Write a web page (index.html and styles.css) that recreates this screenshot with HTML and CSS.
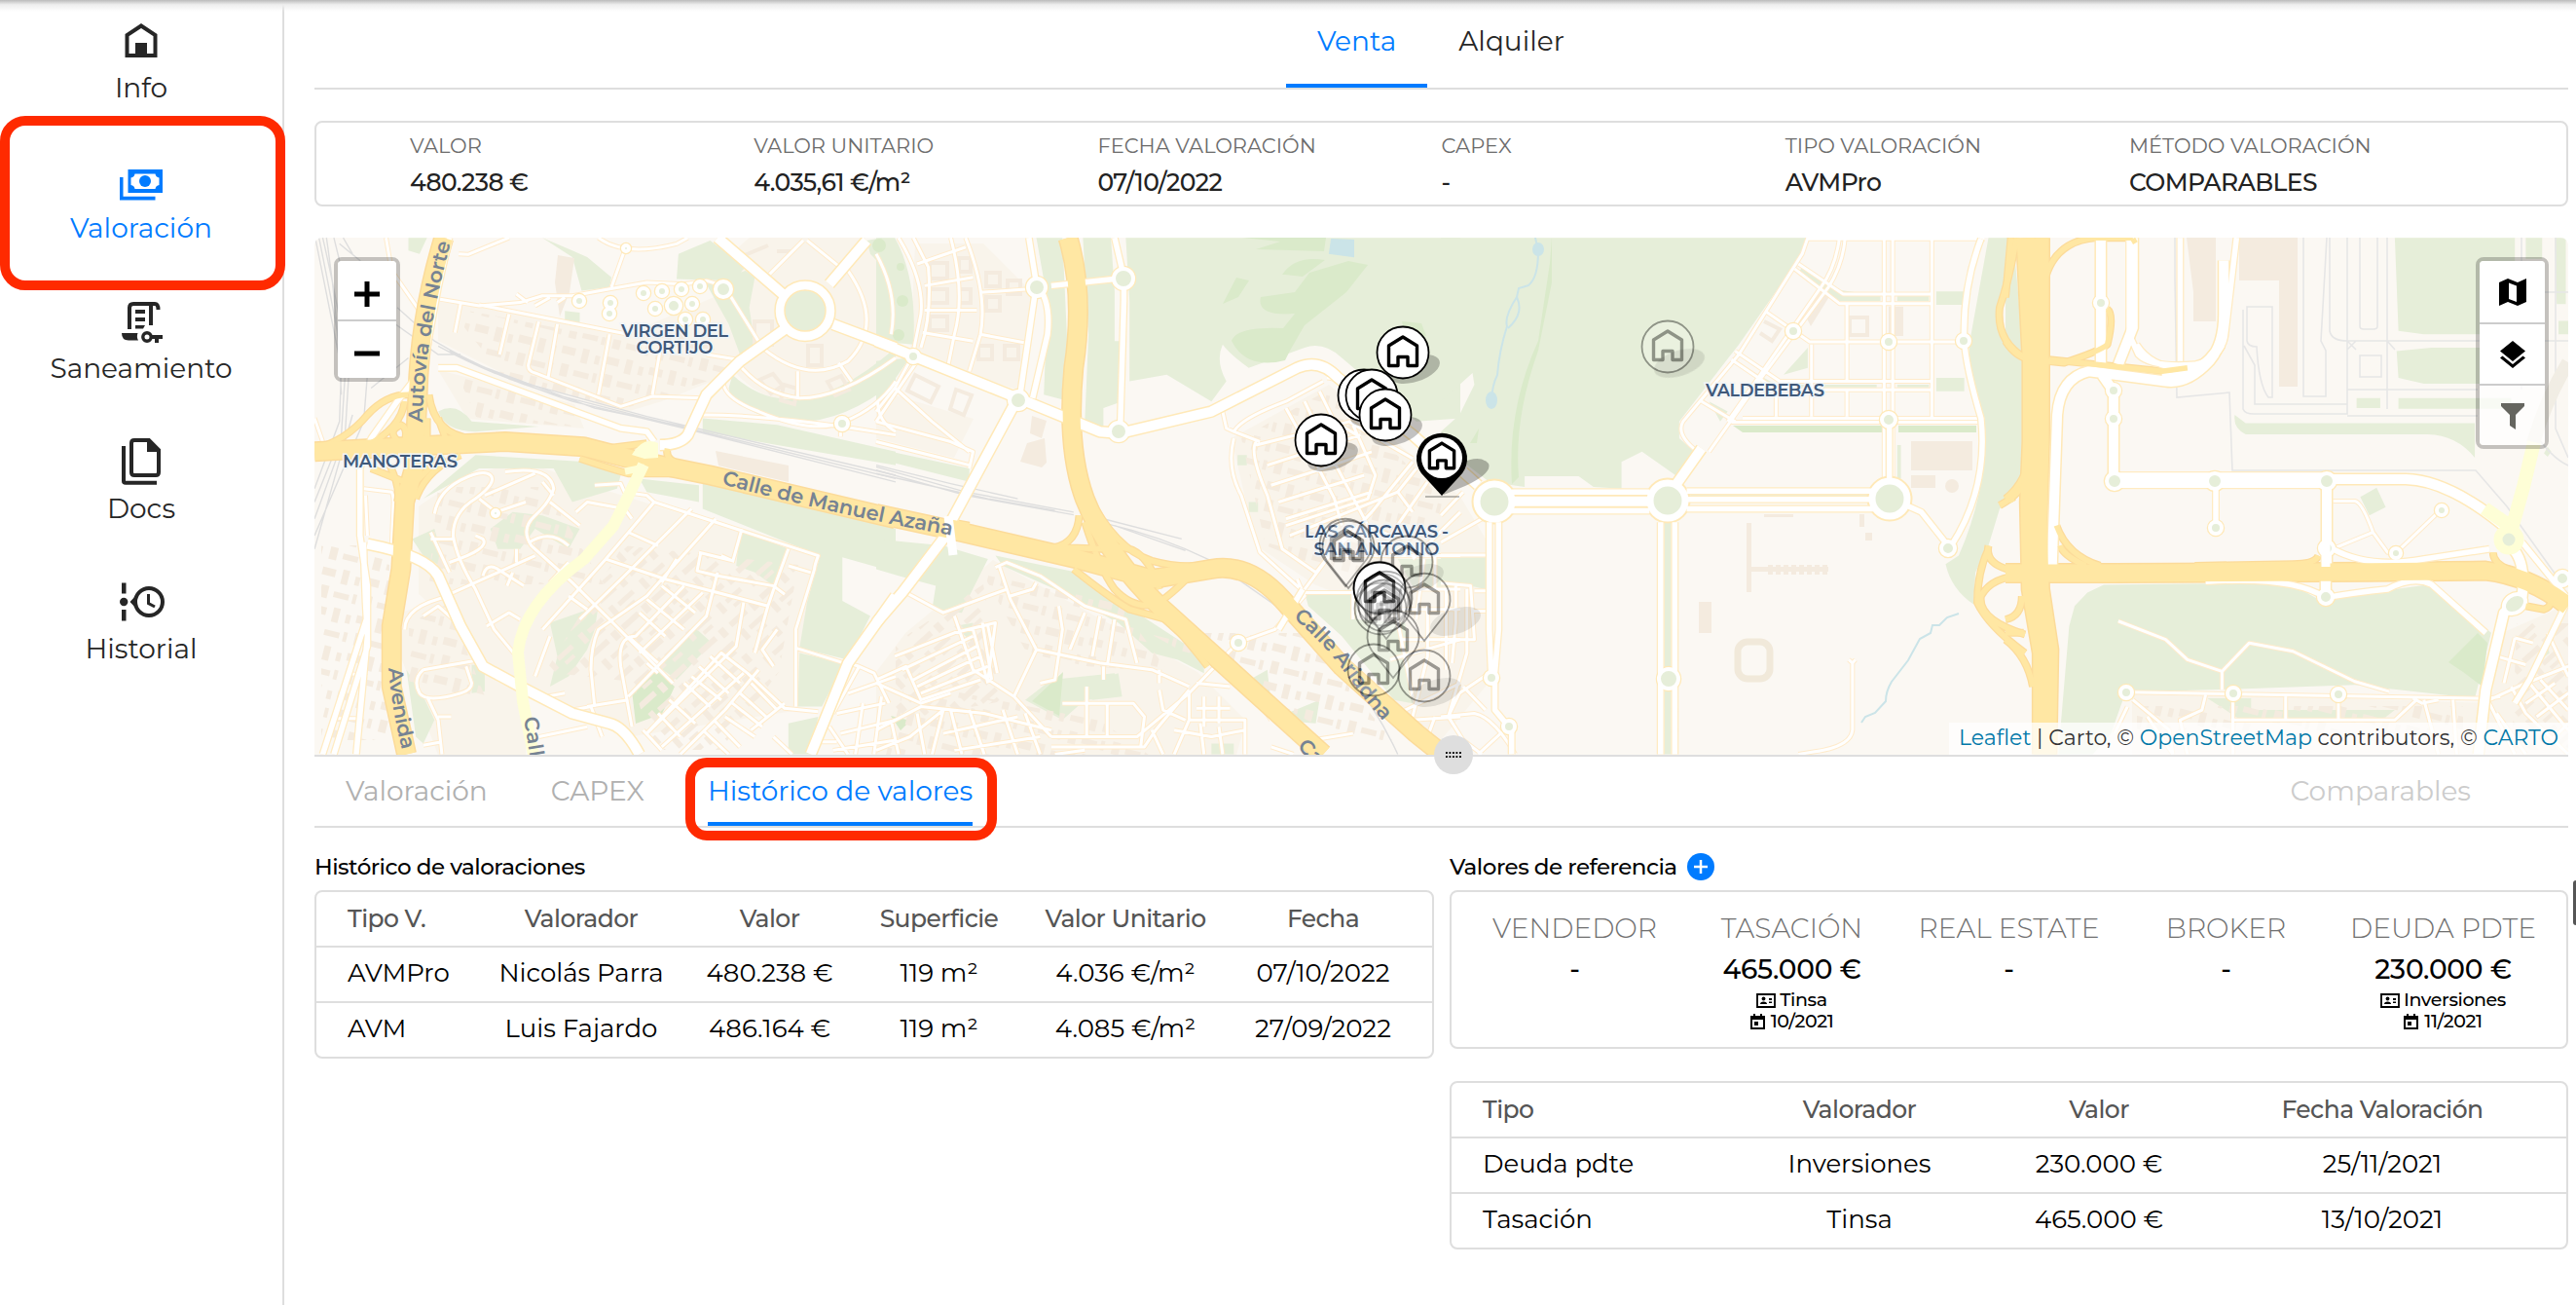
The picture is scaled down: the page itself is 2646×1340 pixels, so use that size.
FILE: index.html
```html
<!DOCTYPE html>
<html lang="es">
<head>
<meta charset="utf-8">
<title>Valoración</title>
<link rel="stylesheet" href="styles.css">
</head>
<body>
<div class="app">
  <nav class="sidebar">
    <a class="nav-item">
      <svg class="nav-icon" viewBox="0 0 48 48"><path d="M9.5 39V18L24 8.500 38.500 18V39Z" fill="none" stroke="currentColor" stroke-width="4"/><path d="M18 26H30V40H18Z"/></svg>
      <span>Info</span>
    </a>
    <a class="nav-item active">
      <svg class="nav-icon" viewBox="0 0 48 48"><path fill-rule="evenodd" d="M10.500 12H46V36H10.500ZM17.500 16.500Q17 20 13.500 20.500V28Q17 28.500 17.500 32H38.500Q39 28.500 42.500 28V20.500Q39 20 38.500 16.500Z"/><circle cx="28" cy="24" r="6"/><path d="M2 20H5.500V39.800H38.500V43.400H2Z"/></svg>
      <span>Valoración</span>
    </a>
    <a class="nav-item">
      <svg class="nav-icon" viewBox="0 0 48 48"><path d="M12 32V10Q12 6 16 6H38Q41.500 6 41.500 12M34 7V28" fill="none" stroke="currentColor" stroke-width="4"/><path d="M18 12H28V16H18ZM18 20H28V24H18ZM18 28H28L26 31.500H18ZM4 36H20.500Q19 40 21 43.500H11Q4 43.500 4 36Z"/><circle cx="30" cy="40" r="4.200" fill="none" stroke="currentColor" stroke-width="3.400"/><path d="M34 38H46V42H42V46H38V42H34Z"/></svg>
      <span>Saneamiento</span>
    </a>
    <a class="nav-item">
      <svg class="nav-icon" viewBox="0 0 48 48"><path d="M14 5Q14 2 17 2H32L42 12V35Q42 38 39 38H17Q14 38 14 35Z" fill="none" stroke="currentColor" stroke-width="4"/><path d="M30 2V14H43ZM4 8H8V43.800H40V47.800H8Q4 47.800 4 44Z"/></svg>
      <span>Docs</span>
    </a>
    <a class="nav-item">
      <svg class="nav-icon" viewBox="0 0 48 48"><path d="M4 4.500H8.500V15.500H4ZM4 32H8.500V43.500H4ZM12.500 24L19 17V31Z"/><circle cx="6.200" cy="24" r="4.200"/><circle cx="32" cy="24" r="14" fill="none" stroke="currentColor" stroke-width="4"/><path d="M31.500 16V25.500L38 29" fill="none" stroke="currentColor" stroke-width="3"/></svg>
      <span>Historial</span>
    </a>
  </nav>

  <main class="content">
    <div class="tabs-top"><a class="tab active">Venta</a><a class="tab">Alquiler</a></div>

    <section class="card summary">
      <div><label>VALOR</label><b>480.238 €</b></div>
      <div><label>VALOR UNITARIO</label><b>4.035,61 €/m²</b></div>
      <div><label>FECHA VALORACIÓN</label><b>07/10/2022</b></div>
      <div><label>CAPEX</label><b>-</b></div>
      <div><label>TIPO VALORACIÓN</label><b>AVMPro</b></div>
      <div><label>MÉTODO VALORACIÓN</label><b>COMPARABLES</b></div>
    </section>

    <section class="map">
      <svg class="map-canvas" viewBox="323 244 2315 531">
        <defs>
          <pattern id="blocks" width="46" height="40" patternUnits="userSpaceOnUse" patternTransform="rotate(14)"><path class="building" d="M3 4h14v8H3zM24 2h7v15h-7zM38 6h5v9h-5zM6 22h8v13H6zM20 26h16v6H20zM40 24h4v10h-4z"/></pattern>
          <pattern id="blocks-r" width="42" height="36" patternUnits="userSpaceOnUse" patternTransform="rotate(-42)"><path class="building" d="M2 4h22v6H2zM30 3h7v10h-7zM4 18h6v12H4zM15 20h20v5H15zM18 29h12v4H18z"/></pattern>

          <g id="minor">
            <g transform="matrix(.38265 0 0 .34439 320 240)">
              <path d="M200 12L215 110 290 230M395 60L420 62 490 30 530 12M345 195L450 215 560 205 620 185 700 185 800 165 900 145 1000 150 1060 140 1090 150M450 212L850 300M400 210L385 295M530 240L505 360M610 262L582 390Q580 410 600 415L830 515 915 485 1050 490M660 270L635 430M800 300L770 480M940 320L915 480M1060 360L1145 375M840 50L805 160M770 12Q840 70 980 30L1010 12M1110 160L1205 330M1230 120L1320 20M1330 20L1430 110M1210 340Q1330 450 1440 380Q1540 270 1440 110M1155 400Q1220 480 1310 490Q1420 490 1568 370M1305 410V490M1415 385L1450 440M1105 440Q1105 490 1200 530Q1350 600 1430 560Q1520 520 1568 440M1050 540Q1250 540 1568 600M1420 570V605M1520 500Q1520 560 1568 590M580 205L550 180M640 190L600 215M680 190L660 205"/>
              <path d="M330 835Q340 770 400 735 Q460 700 480 720 T440 790Q380 830 380 900 Q390 970 440 1060L490 1180 550 1260M450 790L495 830 575 800M465 780L600 715M520 710Q640 690 650 760Q640 800 600 840Q560 880 590 930L700 1040 800 1150 970 1340M640 800L720 870M585 920Q640 880 690 930M320 890L370 1010M320 910H380M370 980Q480 940 460 910L440 900M360 1080L600 960M370 1080Q250 1110 250 1180M300 1140L340 1110 390 1160M550 940V980M460 1020Q470 980 500 1000L570 1050M540 1010L525 1050M470 1170L530 1130 560 1150M760 750L830 745 840 770 900 780 920 800 1360 960Q1350 990 1350 1000L1300 1180 1300 1410M710 830L740 800 840 820 860 850M920 800L790 970 620 1180M1020 820L840 1020 720 1150M1085 850L900 1080 770 1180Q750 1230 750 1300L760 1410M1155 880L1130 980M850 890L930 930M790 970L950 1030 1090 1070 1225 1110M1000 1050L870 1200Q820 1200 830 1290L860 1470M1280 940L1250 1030 1225 1110 1190 1250M1280 990L1340 1010M1040 950L1130 975 1100 960M1045 950L1035 1005 1090 1020 1240 1050 1270 1075M1090 1010L1060 1140 850 1380M1160 1100L1140 1230 900 1490M1300 1235L1430 1280M1250 1180L1210 1240 1240 1290M980 970L940 1040M650 780L620 740M690 980L640 1040M690 1080L740 1120M640 1200L600 1320"/>
              <path d="M900 1490L1100 1250 1170 1310 1270 1415 1360 1425M940 1530L1160 1310M900 1280L930 1310M1000 1340L1070 1410M1020 1320L1100 1390M1040 1290L1120 1370M1070 1260L1150 1340M960 1390L1030 1460M930 1430L990 1500M890 1480L940 1540M1130 1400L1210 1470M1150 1370L1220 1440M1180 1340L1250 1420M1110 1440L1190 1500M1200 1300L1110 1420 990 1552M1270 1400L1180 1480M1080 1450L1150 1530M1050 1480L1120 1552M850 1200L930 1280M880 1130L950 1200M900 1090L1000 1180M940 1050L1030 1130M880 1250L1050 1070M740 1410L850 1390M700 1420L750 1410 780 1500M610 1500L740 1470M630 1380L680 1370"/>
              <path d="M140 760L215 770Q220 780 220 800L215 930M145 780L150 900M300 1300L430 1275 450 1270M300 1300Q270 1330 290 1370Q310 1400 400 1370Q430 1360 430 1340L415 1290M310 1380L340 1450 350 1552M300 1525L350 1515M340 1440H375M100 1310L150 1320M70 1445H130M8 550L30 620M1365 1515H1410M1400 1430L1470 1290 1510 1310 1550 1400M1470 1290L1440 1280M1390 1470L1440 1552M1440 1370L1568 1320M1410 1430L1540 1400M1420 1490L1568 1450M1480 1400L1460 1552M1530 1380L1510 1552M1240 1500L1290 1552M1400 1540L1568 1510"/>
            </g>
            <g transform="matrix(.38265 0 0 .34439 900 240)">
              <path d="M0 60Q60 180 40 300M60 12Q130 140 120 240L100 350M100 12L140 100Q150 240 120 340M110 90L240 40M130 155L260 130M130 228H270M125 295L260 320M200 12Q240 180 210 300L190 410M240 12Q300 180 280 300L250 410M280 175L410 165M280 300L400 325M90 380L50 460 0 530M110 380L0 560M50 460L150 560 250 650M0 560L200 620 260 650 250 700M0 620L180 670 250 690"/>
              <path d="M930 530L940 580 960 590 1030 620M960 590Q980 550 1100 500L1200 440M960 610Q940 700 980 780L1030 950 1140 1060M1020 620Q1000 650 1050 780L1090 940 1180 1010M1020 630L1270 560 1330 600 1440 670M1100 520L1150 620 1230 790 1250 870M1150 500L1210 640 1320 870M1050 690L1300 600M1060 750L1200 700 1330 650M1080 800L1310 720M1100 850L1330 770M1110 900L1400 770 1450 700M1280 570L1340 720 1320 790 1100 870M1190 470L1230 560 1290 600M1210 430Q1240 430 1280 480M1440 680L1330 830 1210 970 1150 1060M1480 740L1380 900 1320 870M1400 770L1440 830M1568 830L1440 970M1280 870L1180 1010M1150 1070H1290M1130 1030L1150 1080 1070 1180 970 1220M1210 960H1568M1280 1060L1280 1150M1470 970L1450 1150M1500 960L1500 1060H1568M1440 1060L1568 1060M1410 1120H1568M1530 1060V1300M1480 1110V1260L1440 1440M1410 1210H1568M1380 1270L1568 1210M1420 1420L1568 1340M1440 1450L1568 1440M1500 1440L1480 1500M1390 1100L1440 1380"/>
              <path d="M320 995L350 980 440 1020 480 1050 560 1110 670 1150 700 1280M330 990L360 1090 430 1240 370 1380M430 1240L600 1280 740 1300 840 1350M80 1070L180 1130 350 1060M360 1080L420 1060 430 1040M210 1140L260 1300 370 1380 470 1500M490 1110L500 1180 480 1330 440 1340M600 1140L580 1260M560 1130L520 1240M640 1150L620 1290M50 1260L210 1190 320 1160 300 1330M0 1330L80 1290 120 1390 280 1330M100 1330L270 1230M110 1350L280 1260M120 1370L300 1290M70 1300L260 1200M0 1340L120 1400 200 1370M260 1180L300 1340M285 1160L310 1330M300 1170L325 1310M0 1480L120 1410 290 1430 470 1480M0 1540L90 1500 180 1420 150 1552M40 1450L60 1552M110 1430L130 1552M200 1420L230 1552M250 1420L290 1552M180 1490L380 1440M210 1540L440 1500M340 1420L380 1552M400 1430L440 1552M470 1500H700L840 1370M470 1530H720L750 1480 840 1360M500 1400H690L720 1440 710 1530M565 1350V1500M620 1400V1500M760 1360L770 1420 830 1450M760 1300V1340M840 1370L840 1450 800 1552M840 1450H990V1552M860 1415H950M880 1380V1470M920 1380V1460M800 1480L900 1500 990 1480M740 1480L770 1552M870 1460L880 1552M920 1470L930 1552M610 1290V1330M1170 1510L1280 1490M1060 1530L1120 1552M560 1540L480 1552"/>
              <path d="M840 1370L970 1220M860 1340L950 1350M950 1270L1060 1450"/>
            </g>
            <g transform="matrix(.38265 0 0 .34439 1480 240)">
              <path d="M985 12L970 60 800 360 650 560Q630 600 690 650M1085 12Q1080 90 1040 160L860 430 720 650M1070 12Q1060 100 1020 160L770 560M960 90L1080 180H1320M950 105L1070 208H1320M870 230L990 322H1410M790 350L910 440H1320M780 375L900 465H1320M700 500L790 560M1190 12V740M1213 12V740M1318 15V548M1090 210V440M995 330V545M900 465V545M1090 465V545M810 550H1450M780 562H1440M985 15H1460M0 958H125M0 1042L80 1050 90 1210H0M90 1065H125M85 1125H125M40 1050V1160L30 1280M70 1060V1250L20 1440M0 1210H85M50 1370L130 1310M0 1440L90 1430Q140 1440 200 1552M50 1370L20 1440 60 1510 110 1552M60 1350L120 1420M100 1552L180 1470M0 840L60 770M0 920L110 850M960 1552L1000 1545Q1100 1530 1105 1480V1280L1095 1270M1105 1280L1113 1270"/>
            </g>
            <g transform="matrix(.37372 0 0 .34439 2060 240)">
              <path d="M310 1155L440 1210 500 1270 595 1305 670 1220 790 1245 960 1335 1055 1365M595 1305V1360M335 1367L1300 1385M350 1390L450 1480 460 1552M335 1410L300 1490M550 1375L540 1420 480 1450 500 1552M625 1390V1552M770 1375V1450M915 1390V1450M620 1450H1070L1130 1390M1150 1390L1190 1552M1230 1390L1240 1552M390 1440L460 1552M900 797H960Q980 800 1010 890L1050 950 1075 950 1190 830M910 935L1010 890M1330 1390L1430 1340 1547 1290M1350 1260L1430 1285M1400 1205L1450 1220M1400 1205L1370 1340M1440 1340L1547 1480M1490 1190L1547 1320M1330 1400L1400 1552M1350 1430L1430 1552M1470 1330L1547 1420M1430 1400L1510 1340M1460 1440L1547 1370M1390 1350L1430 1430 1547 1552M1500 1510L1547 1460M1300 1390L1360 1380M1120 1385L1145 1400 1190 1390"/>
            </g>
          </g>

          <g id="major">
            <g transform="matrix(.38265 0 0 .34439 320 240)">
              <path d="M370 12L340 160 300 400 230 500 160 610 130 700 130 900 150 1050 150 1230 60 1552M140 920Q140 960 145 1100L150 1200 120 1552M150 1140L30 1552M340 400L390 400 830 580 900 590 920 620"/>
            </g>
            <g transform="matrix(.38265 0 0 .34439 900 240)">
              <path d="M410 12L430 150 385 490M430 150Q470 200 460 300L420 490M640 12L665 130V200L655 580M470 155L640 135M1145 1060L1080 1180"/>
            </g>
            <g transform="matrix(.38265 0 0 .34439 1480 240)">
              <path d="M1450 15Q1400 160 1405 320Q1410 400 1450 550Q1470 760 1370 930M190 770H560M190 826H560M660 767H1160M660 792H1160M660 820H1160M130 860V1180L135 1310M155 860V1180L145 1310V1420L190 1480V1552M590 860V1552M628 860V1552M1204 560V740M1250 810L1290 830 1365 935"/>
            </g>
            <g transform="matrix(.37372 0 0 .34439 2060 240)">
              <path d="M480 12V380M340 12V300L365 360Q400 400 520 390Q600 370 605 290L635 12M360 330Q420 430 560 385M310 750H880M310 720H880M578 760V870M1320 1190L1170 1045Q1120 1020 1050 1060 960 1070 880 1085 790 1020 550 1037M900 940Q1000 1000 1150 970L1330 940M1420 920L1547 1090 1440 1330 1400 1400"/>
            </g>
          </g>

          <g id="avenue">
            <g transform="matrix(.38265 0 0 .34439 320 240)">
              <path d="M1090 12L1265 180M1490 20L1390 150M1400 270L1568 340M1270 285L1150 380 1060 480 1010 600Q990 630 935 630M1568 1080L1440 1280 1340 1552M150 925Q310 960 340 1020L400 1170 460 1290 560 1350 700 1430 800 1460Q840 1470 880 1552"/>
              <ellipse cx="1325" cy="230" rx="66" ry="74"/>
            </g>
            <g transform="matrix(.38265 0 0 .34439 900 240)">
              <path d="M0 320L100 365 380 490 600 590 655 595 900 530 1130 400Q1190 370 1240 430L1440 600 1560 720M380 490L200 860 180 910 70 1070 0 1160"/>
            </g>
            <g transform="matrix(.38265 0 0 .34439 1480 240)">
              <path d="M60 710L100 750M190 798H560M700 640L630 750"/>
            </g>
            <g transform="matrix(.37372 0 0 .34439 2060 240)">
              <path d="M262 12V395M350 12V280L310 390M600 80V240Q600 330 560 380Q500 450 440 440L230 410Q150 430 142 540L127 1015M590 330Q540 430 430 430M265 420L297 470V740M300 735H880M883 740V985M880 1035V1080M880 732H1100Q1220 735 1380 880M1395 940Q1430 980 1420 1080L1370 1130 1320 1360 1300 1552"/>
            </g>
          </g>

          <g id="rings">
            <circle cx="743" cy="297" r="8"/><circle cx="643" cy="255" r="3"/><circle cx="865" cy="435" r="6"/><circle cx="509" cy="527" r="3"/>
            <circle cx="1065" cy="295" r="9"/><circle cx="1154" cy="286" r="10"/><circle cx="1046" cy="411" r="9"/><circle cx="1149" cy="443" r="9"/><circle cx="938" cy="366" r="6"/><circle cx="1272" cy="660" r="6"/>
            <circle cx="1842" cy="340" r="6"/><circle cx="1940" cy="351" r="6"/><circle cx="2017" cy="350" r="6"/><circle cx="1940" cy="431" r="7"/><circle cx="2001" cy="563" r="7"/><circle cx="1714" cy="697" r="10"/><circle cx="1532" cy="696" r="6"/><circle cx="1550" cy="746" r="6"/>
            <circle cx="2158" cy="311" r="6"/><circle cx="2171" cy="401" r="6"/><circle cx="2171" cy="430" r="6"/><circle cx="2172" cy="494" r="8"/><circle cx="2275" cy="494" r="8"/><circle cx="2390" cy="494" r="8"/><circle cx="2276" cy="542" r="6"/><circle cx="2390" cy="563" r="7"/><circle cx="2389" cy="613" r="7"/><circle cx="2508" cy="524" r="5"/><circle cx="2461" cy="568" r="5"/><circle cx="2184" cy="711" r="6"/><circle cx="2294" cy="712" r="6"/><circle cx="2402" cy="713" r="6"/><ellipse cx="2583" cy="620" rx="12" ry="9" transform="rotate(-35 2583 620)"/><circle cx="2632" cy="594" r="7"/>
            <circle cx="627" cy="311" r="5"/><circle cx="595" cy="309" r="5"/><circle cx="661" cy="301" r="5"/><circle cx="680" cy="299" r="5"/><circle cx="700" cy="297" r="5"/><circle cx="719" cy="294" r="5"/><circle cx="673" cy="317" r="5"/><circle cx="692" cy="314" r="7"/><circle cx="711" cy="312" r="5"/><circle cx="626" cy="322" r="5"/><circle cx="704" cy="328" r="5"/><circle cx="722" cy="328" r="5"/>
          </g>

          <g id="plazas">
            <circle cx="1535" cy="515" r="18"/><circle cx="1713" cy="514" r="18"/><circle cx="1941" cy="512" r="18"/>
          </g>

          <g id="motorway">
            <g transform="matrix(.38265 0 0 .34439 320 240)">
              <path d="M355 12Q290 250 285 480L275 700 250 800 240 1000 215 1170 215 1350 255 1552M8 650L240 635 520 620 730 635 870 675 1070 720 1568 850"/>
            </g>
            <g transform="matrix(.38265 0 0 .34439 900 240)">
              <path d="M515 12Q560 180 530 400Q510 640 560 790Q620 960 760 1110L1200 1552M0 835L230 890 540 970 740 1030 900 1000Q1000 980 1090 1090L1250 1290 1450 1490 1520 1552"/>
            </g>
            <g transform="matrix(.37372 0 0 .34439 2060 240)">
              <path d="M55 12L72 380V620L65 800 70 1060 100 1250V1552M95 12V620L90 850 95 1060 120 1240 115 1552M0 1012L300 1012 1000 1008 1320 1005Q1440 1020 1547 1110"/>
            </g>
          </g>

          <g id="ramps">
            <g transform="matrix(.38265 0 0 .34439 320 240)">
              <path d="M8 640Q90 620 150 540Q200 480 260 480M150 630Q240 580 250 500M235 620Q200 590 240 570Q260 580 250 620M315 480Q330 600 430 610L300 620M310 550V610M340 550L360 610M160 700L250 740M210 690Q240 760 230 800M400 660Q310 700 280 790M350 660L280 740M790 640L900 625M720 670Q800 700 850 715L980 715M955 640Q950 670 975 680"/>
            </g>
            <g transform="matrix(.38265 0 0 .34439 900 240)">
              <path d="M545 840Q540 920 480 935L620 940Q720 910 760 1060M570 780Q640 940 740 975Q820 1000 900 985M560 860Q600 1000 640 1060Q690 1120 750 1105Q790 1080 850 1010M530 1000Q620 1080 680 1120L780 1150Q820 1190 890 1290M480 940Q600 1000 720 1020M200 860L250 870"/>
            </g>
            <g transform="matrix(.38265 0 0 .34439 1480 240)">
              <path d="M1545 12Q1530 120 1500 220Q1490 320 1568 370M1568 740Q1550 780 1500 810M1530 790L1535 800M1470 930Q1460 980 1520 1000L1568 1000M1568 1020Q1480 1020 1450 1080Q1440 1150 1568 1195M1470 940Q1440 1010 1440 1100Q1470 1170 1568 1250"/>
            </g>
            <g transform="matrix(.37372 0 0 .34439 2060 240)">
              <path d="M15 12L0 190M110 130Q140 20 250 12L350 12M350 15L357 28M0 320Q30 370 70 375L160 385Q260 350 280 330 300 240 280 225M120 375L430 410 500 400M140 870Q170 960 260 990M150 930Q160 960 220 990M860 960Q850 985 790 985L520 990M0 1150Q45 1140 45 1080M0 1190H50M0 1210Q60 1260 75 1350M70 640Q60 740 0 790M1340 950Q1340 980 1380 1000L1240 990M1430 1110L1480 1120Q1510 1110 1490 1070"/>
            </g>
          </g>

          <path id="house" d="M-14.500 -7L0 -16L14.500 -7V13.500H5V4.500H-5V13.500H-14.500Z" fill="none" stroke="#000" stroke-width="3.400" stroke-linejoin="round"/>
          <g id="dot-shadow"><ellipse cx="12" cy="17" rx="27" ry="13" transform="rotate(-18 12 17)" fill="#000" opacity=".24"/></g>
          <g id="dot"><circle r="26.500" fill="#fff" stroke="#000" stroke-width="1.800"/><use href="#house"/></g>
          <g id="ghost" opacity=".38"><circle r="26.500" fill="#fff" fill-opacity=".45" stroke="#000" stroke-width="1.800"/><use href="#house"/></g>
          <g id="ghost-pin" opacity=".38"><path d="M0 42L-22 14A26.500 26.500 0 1 1 22 14Z" fill="#fff" fill-opacity=".45" stroke="#000" stroke-width="1.800"/><use href="#house"/></g>

          <path id="way-norte" d="M434 434Q436 345 464 246"/>
          <path id="way-azana" d="M741 497Q860 529 984 551"/>
          <path id="way-avenida" d="M399 686Q402 728 414 774"/>
          <path id="way-calle" d="M538 737L548 800"/>
          <path id="way-ariadna" d="M1328 634Q1360 661 1380 689T1422 742"/>
          <path id="way-ca" d="M1332 767L1370 806"/>
        </defs>

        <rect x="323" y="244" width="2315" height="531" fill="#fbf8f3"/>

        <g class="residential">
          <path d="M450 305L640 345 745 300 760 380 680 412 640 424 520 385 450 350ZM450 380L590 415 600 440 480 430ZM430 520Q520 455 580 490L840 572 815 730 650 756 560 725 430 610ZM410 630L465 610 540 715V775H450L410 670Z"/>
          <circle cx="827" cy="320" r="95"/>
          <path d="M940 250L1010 250 1060 300 1045 400 935 365ZM900 400L1000 430 980 470 900 450ZM930 650L1020 575 1230 690 1280 740 1270 775H900V690ZM1265 450L1365 395 1500 510 1530 560V700L1480 760 1440 740 1400 620 1350 600 1290 560Z"/>
          <path d="M2570 650L2638 620V775H2550ZM2190 710L2560 722 2540 775H2190Z"/>
        </g>

        <g class="green">
          <g transform="matrix(.38265 0 0 .34439 320 240)">
            <path d="M620 12L700 50 740 70 805 130 800 160 725 170 700 70ZM985 60L1070 20 1165 100 1130 140 980 135ZM1060 150L1165 110 1190 130 1175 220 1190 330 1150 360 1120 270ZM1130 420Q1300 600 1568 340L1568 440Q1400 590 1240 555Q1120 510 1120 460ZM1050 550L1250 570 1568 650V690L1250 630 1050 590ZM340 530Q390 500 430 560L610 575 440 590Q360 590 340 530ZM1050 740L1568 880V1010L1425 965V1095L1500 1140 1440 1270 1310 1235 1330 1100 1365 960 1050 820ZM880 730L1040 750V800L900 770ZM440 660L740 680 830 720 820 760 700 800 650 700 450 700 300 790ZM1150 880L1280 940 1240 1050 1190 1010 1140 990ZM480 880L540 830 620 840 720 880 690 940 600 880 560 940 500 940ZM930 1290L1030 1175 1075 1220 980 1330ZM640 1160L770 1110 760 1180 740 1240 690 1320 640 1350 660 1260ZM270 910L330 880 360 1000 300 960ZM1310 1250L1430 1280 1370 1410H1305ZM255 1300L300 1380 330 1450 300 1520 280 1500ZM430 1285L465 1290V1365L430 1370ZM260 12H310L290 60 260 50ZM680 230L720 235V270L680 260ZM1280 1460L1360 1440 1340 1552H1280ZM1490 20L1530 12 1568 60V140L1500 60Z"/>
          </g>
          <g transform="matrix(.38265 0 0 .34439 900 240)">
            <path d="M0 12H50Q110 130 100 330L0 320ZM0 380L90 370 40 450 0 520ZM430 12H500L520 500 450 480 460 200ZM555 12H630L640 170V320H660V500L610 520V590L560 560 570 300ZM670 12H1568V550L1450 560 1250 370Q1200 320 1150 340L1000 400Q950 360 930 330Q910 380 940 440L900 500 780 420 680 440V200ZM0 640L250 700V740L0 670ZM0 910L180 930 300 970 250 1080 230 1130 150 1120 160 1050 60 1020 0 1000ZM320 960L540 1010 700 1130 880 1260 880 1310 810 1270 740 1250 650 1160 480 1060 340 990ZM1150 1070L1290 1060V1150L1420 1160 1440 1400 1390 1390 1250 1200 1160 1110ZM400 1390L470 1330 640 1310 660 1380 560 1390 500 1450ZM1400 970H1568V1060L1440 1050ZM570 1340L650 1310 660 1380 580 1390ZM1060 1450L1190 1390 1180 1460ZM970 1350L1050 1300 1060 1400ZM1000 800H1025V830H1000ZM970 660H995V690H970ZM900 1520H960V1552H900ZM210 1170L260 1160 270 1230Z"/>
          </g>
          <g transform="matrix(.38265 0 0 .34439 1480 240)">
            <path d="M0 12H980L970 60 800 330 640 560V610L680 650 630 720 540 650 485 680V760L410 755 370 723H225V755L130 740 60 680 0 590 50 540 90 450 85 415 0 500ZM300 70L320 95 300 125ZM1470 12H1535L1500 220Q1490 320 1540 370L1568 380V740L1500 820 1470 930 1435 1010 1430 1105Q1370 1060 1355 985L1390 960Q1470 760 1460 550Q1410 400 1420 320ZM0 965H120V1060L0 1030ZM600 860H618V1552H600ZM970 100L1050 165 1180 185V200H1070L960 115ZM920 420L985 340V400ZM820 400L900 450H1170V458H890ZM1330 172H1405V212H1330ZM1330 430H1405V470H1330ZM1225 450H1310V458H1225ZM1225 185H1310V200H1225ZM670 775H1150V785H670ZM1225 630H1235V730H1225ZM720 500L770 530 750 560Z"/>
          </g>
          <g transform="matrix(.37372 0 0 .34439 2060 240)">
            <path d="M0 12H20L30 120 45 300V640L0 770ZM1070 12H1400V300H1150L1080 290ZM1075 350L1170 340H1400V447H1150L1080 430ZM1080 490H1390V522H1080ZM965 490H1030V520H965ZM630 540L660 565H1290V668Q1240 600 1160 598H660Q625 580 630 540ZM270 1047L780 1040 860 1090 1170 1045 1335 1190 1290 1385 960 1345 620 1358 330 1367 290 1490 240 1552H145L175 1170 190 1110 225 1070ZM975 785L1020 757 1045 815 1000 840ZM1465 1240L1490 1230 1495 1250 1470 1270ZM555 1385H675V1420H1070L1040 1445H640ZM1510 12H1540V210H1515ZM1430 12H1475V75H1430ZM1490 635L1500 650 1490 665 1480 655ZM1520 260H1547V300H1520Z"/>
          </g>
        </g>

        <g class="green-deep">
          <path d="M649 709L674 688 693 705 680 733 653 743ZM1315 248L1290 256 1360 258 1362 244H1276ZM1317 282Q1330 262 1361 267L1338 284 1320 282ZM1405 272L1383 300 1340 334 1325 360 1320 370Q1280 380 1265 350 1270 335 1318 337L1330 322Q1290 325 1295 305L1330 300 1345 280 1385 268ZM1256 312L1270 285 1283 288 1272 305ZM1440 330L1460 332 1465 345 1445 350ZM1553 497Q1548 420 1580 350L1592 270 1594 244 1594 290 1580 360Q1555 430 1560 490ZM1510 455L1519 440 1517 455ZM1060 720L1092 690 1088 735ZM915 735L935 740 925 750ZM2515 680L2545 650 2555 660 2550 705 2530 690ZM1780 437H1935V444H1790ZM1950 437H2030V444H1950Z"/>
          <circle cx="925" cy="274" r="4"/><circle cx="927" cy="309" r="6"/><circle cx="923" cy="344" r="6"/><circle cx="903" cy="252" r="7"/>
        </g>

        <g fill="url(#blocks)">
          <path d="M460 315L640 350 700 330 760 380 640 420 520 390ZM470 385L590 420 590 438 490 430ZM450 500L560 500 620 600 440 600ZM420 640L460 620 500 720 420 700ZM330 560H400V760H330ZM1275 450L1365 400 1490 520 1400 600 1300 560ZM1010 590L1150 620 1200 690 1060 680Z"/>
          <path d="M1180 650H1340L1430 760H1380ZM930 700L1130 740 1180 775H910ZM2195 725H2530V750H2195Z"/>
        </g>
        <g fill="url(#blocks-r)">
          <path d="M640 560L820 580 800 690 740 770 670 770 650 700 560 690ZM920 660L1010 600 1030 720 920 740ZM2585 640H2638V770H2580Z"/>
        </g>

        <g class="building">
          <path d="M573 262L590 265 585 300 575 325 570 290ZM735 463L810 478V495L738 478ZM1060 427L1075 432 1070 450 1058 445ZM1055 455L1073 450 1075 475 1070 480 1048 474ZM1794 537H1799V608H1794ZM1745 618H1758V650H1745ZM1799 582H1878V587H1799ZM1812 528H1842V531H1812ZM1910 528H1915V541H1910ZM1916 547H1923V555H1916ZM1963 453H2026V483H1963ZM1963 488H1988V501H1963ZM2246 244H2276V330H2253V300ZM2300 244H2360V397H2341V288H2300ZM1855 325L1870 295 1880 303 1860 335ZM1940 315H1955V345H1940Z"/>
          <path d="M1816 585H1878" fill="none" stroke="#f4ebdf" stroke-width="10" stroke-dasharray="5 3"/>
          <circle cx="2005" cy="499" r="7"/>
          <path d="M1900 326H1918V344H1900ZM1812 330L1828 338 1820 350 1808 342" fill="none" stroke="#f4ebdf" stroke-width="4"/>
          <rect x="1785" y="659" width="33" height="38" rx="10" fill="none" stroke="#f1e9da" stroke-width="7"/>
          <g fill="none" stroke="#f4ebdf" stroke-width="4"><path d="M955 270h18v16h-18zM985 265h12v14h-12zM953 297h20v14h-20zM985 297h12v14h-12zM1013 305h14v14h-14zM1035 288h13v14h-13zM1013 280h14v14h-14zM955 325h18v14h-18zM1005 355h14v14h-14zM1032 355h14v14h-14zM940 385l24 12-8 16-24-12zM982 400l16 6-8 20-14-6z"/><path d="M775 330h18v24h-18zM780 390l14-6 10 12-12 8zM830 355h14v20h-14zM805 395l14 4-3 16-14-4zM850 392l14-6 8 14-14 6zM765 262l24-10M798 258l18 0"/></g>
        </g>

        <g class="taxiway">
          <path d="M2234 244V285L2236 408 2290 403 2293 483H2543L2575 520 2625 590M2304 318V420Q2306 425 2315 425H2411V412M2308 318V350Q2309 356 2318 356Q2320 395 2330 408H2334V315H2308ZM2366 244V407H2389V360L2384 350 2390 244M2393 244V340Q2395 350 2411 350H2638M2411 244V350V420M2305 355L2316 375V415H2411M2452 244V420M2424 244V335Q2424 338 2428 338H2438Q2442 338 2442 335V244M2424 365H2446V387H2424ZM2411 400H2545M2411 427H2545M2411 350L2420 359M2411 359L2420 350M2452 350L2460 359M2600 300H2638M2590 244V400M2625 244V440L2638 470M2600 440Q2620 470 2638 478"/>
        </g>

        <g class="rail">
          <g transform="matrix(.38265 0 0 .34439 320 240)">
            <path d="M10 12Q50 230 80 400L75 560 8 760M20 12Q60 230 90 420L80 600 8 800M30 12Q70 200 100 420L90 600 8 850M40 12Q70 230 80 480M60 12Q90 150 150 420L140 560 8 900M75 30L130 80 200 250 340 360H400M230 220L330 320Q480 420 620 460L900 545 1568 720M340 335Q480 420 640 475L900 550 1568 730M370 350Q540 440 700 500L1000 580 1568 740M110 540L8 940M160 460L260 370M420 380L760 520 1000 575M85 12L110 60"/>
          </g>
          <g transform="matrix(.38265 0 0 .34439 900 240)">
            <path d="M0 695L240 770 530 830M0 705L240 780 530 838M0 715L300 790 480 825M0 690L200 745 380 790M610 850L820 910M620 865Q760 900 900 975L1100 1130Q1300 1310 1400 1552M640 870L830 945"/>
          </g>
        </g>

        <g class="water">
          <path d="M1577 244L1580 258Q1580 285 1570 293L1560 296 1558 305Q1545 325 1548 335Q1540 360 1538 385Q1533 395 1532 410M1558 305Q1565 320 1553 333L1549 337M2012 630L2000 634 1992 642H1985L1983 650 1972 656 1960 678 1943 700Q1937 710 1937 720L1926 732 1916 736 1912 742"/>
          <ellipse cx="1532" cy="411" rx="5" ry="8"/><ellipse cx="1580" cy="256" rx="5" ry="6"/><path class="fill" d="M1368 246L1390 247V263L1366 260Z"/>
        </g>

        <use href="#minor" class="minor-case"/><use href="#minor" class="minor-fill"/>
        <use href="#ramps" class="ramp-case"/><use href="#motorway" class="motor-case"/>
        <use href="#major" class="major-case"/><use href="#avenue" class="avenue-case"/><use href="#plazas" class="plaza-case"/><use href="#rings" class="ring-case"/>
        <use href="#major" class="major-fill"/><use href="#avenue" class="avenue-fill"/><use href="#plazas" class="plaza-fill"/><use href="#rings" class="ring-fill"/>
        <ellipse cx="827" cy="319" rx="21" ry="21" fill="#e6eed9" stroke="#ffe9b8" stroke-width="1.500"/>
        <use href="#ramps" class="ramp-fill"/><use href="#motorway" class="motor-fill"/>

        <path d="M661 477L646 508 630 540 600 574Q537 620 532 670L537 720 549 780" fill="none" stroke="#fefed6" stroke-width="12"/>
        <path d="M649 467Q660 448 676 455V470L662 471Z" fill="#fefed6"/>
        <path d="M642 484L662 480" stroke="#fefed6" stroke-width="7"/>
        <path d="M2638 372Q2615 410 2602 455" fill="none" stroke="#f1ede4" stroke-width="14"/>
        <path d="M2603 454L2592 500 2578 550M2552 522L2578 540" fill="none" stroke="#fefed6" stroke-width="14"/>
        <circle cx="2577" cy="554" r="11" fill="#e6eed9" stroke="#fefed6" stroke-width="9"/>
        <path d="M974 530L979 570M2389 556V582" stroke="#fff" stroke-width="9"/>

        <g class="place">
          <text x="693" y="346" textLength="110">VIRGEN DEL</text><text x="693" y="363" textLength="79">CORTIJO</text>
          <text x="411" y="480" textLength="118">MANOTERAS</text>
          <text x="1813" y="407" textLength="122">VALDEBEBAS</text>
          <text x="1414" y="552" textLength="148">LAS CÁRCAVAS -</text><text x="1414" y="570" textLength="129">SAN ANTONIO</text>
        </g>
        <g class="way">
          <text><textPath href="#way-norte" textLength="188">Autovía del Norte</textPath></text>
          <text><textPath href="#way-azana" textLength="243">Calle de Manuel Azaña</textPath></text>
          <text><textPath href="#way-avenida" textLength="86">Avenida</textPath></text>
          <text><textPath href="#way-calle">Call</textPath></text>
          <text><textPath href="#way-ariadna" textLength="142">Calle Ariadna</textPath></text>
          <text><textPath href="#way-ca">Ca</textPath></text>
        </g>

        <g>
          <use href="#dot-shadow" x="1441" y="362"/><use href="#dot-shadow" x="1401" y="406"/><use href="#dot-shadow" x="1423" y="426"/><use href="#dot-shadow" x="1357" y="452"/>
          <path d="M1483 508Q1480 490 1500 476Q1520 466 1529 476Q1533 486 1505 499Z" opacity=".28"/><path d="M1464 510H1499" stroke="#000" stroke-width="2" opacity=".25"/>
          <use href="#dot" x="1441" y="362"/><use href="#dot" x="1401" y="406"/><use href="#dot" x="1409" y="406"/><use href="#dot" x="1423" y="426"/><use href="#dot" x="1357" y="452"/>
          <path d="M1481 509L1460 486A26 26 0 1 1 1502 486Z"/><circle cx="1481" cy="470" r="21" fill="#fff"/><use href="#house" transform="translate(1481 469) scale(.87)"/>
          <g opacity=".4"><use href="#dot-shadow" x="1713" y="356"/><use href="#dot-shadow" x="1445" y="577"/><use href="#dot-shadow" x="1483" y="621"/><use href="#dot-shadow" x="1463" y="694"/></g>
          <use href="#ghost" x="1713" y="356"/><use href="#ghost" x="1445" y="577"/>
          <use href="#ghost-pin" x="1382" y="560"/><use href="#ghost-pin" x="1385" y="562"/>
          <use href="#dot" x="1417" y="604"/>
          <use href="#ghost-pin" x="1463" y="616"/>
          <use href="#ghost" x="1420" y="616"/><use href="#ghost-pin" x="1424" y="614"/><use href="#ghost" x="1418" y="625"/><use href="#ghost-pin" x="1417" y="604"/><use href="#ghost" x="1422" y="622"/>
          <use href="#ghost-pin" x="1431" y="654"/><use href="#ghost" x="1411" y="688"/><use href="#ghost" x="1463" y="694"/>
        </g>
      </svg>

      <div class="ctl zoom">
        <button><svg viewBox="0 0 26 26"><path d="M0 13H26M13 0V26" stroke="#000" stroke-width="5"/></svg></button>
        <button><svg viewBox="0 0 26 26"><path d="M0 13H26" stroke="#000" stroke-width="5"/></svg></button>
      </div>
      <div class="ctl layers">
        <button><svg viewBox="0 0 28 28"><path fill-rule="evenodd" d="M0 4L9 0 19 4 28 0V24L19 28 9 24 0 28ZM10 4.500V21L18 24V7.500Z"/></svg></button>
        <button><svg viewBox="0 0 28 28"><path d="M14 0L27 10.500 14 21 1 10.500ZM14 28L1 17.500 3.500 15.500 14 24 24.500 15.500 27 17.500Z"/></svg></button>
        <button class="off"><svg viewBox="0 0 28 28"><path d="M2 1H26V4L17 13V28L11 24V13L2 4Z"/></svg></button>
      </div>
      <div class="attribution"><a>Leaflet</a> | Carto, © <a>OpenStreetMap</a> contributors, © <a>CARTO</a></div>
      <div class="drag"><svg viewBox="0 0 16 6"><path d="M0 1H16M0 5H16" stroke="#000" stroke-width="1.800" stroke-dasharray="1.800 1.700"/></svg></div>
    </section>

    <div class="tabs-bottom">
      <a>Valoración</a><a class="capex">CAPEX</a><a class="active">Histórico de valores<i class="mark"></i></a><a class="right">Comparables</a>
    </div>

    <div class="panels">
      <section>
        <h2>Histórico de valoraciones</h2>
        <div class="card grid history">
          <div class="row head"><span>Tipo V.</span><span>Valorador</span><span>Valor</span><span>Superficie</span><span>Valor Unitario</span><span>Fecha</span></div>
          <div class="row"><span>AVMPro</span><span>Nicolás Parra</span><span>480.238 €</span><span>119 m²</span><span>4.036 €/m²</span><span>07/10/2022</span></div>
          <div class="row"><span>AVM</span><span>Luis Fajardo</span><span>486.164 €</span><span>119 m²</span><span>4.085 €/m²</span><span>27/09/2022</span></div>
        </div>
      </section>
      <section>
        <h2>Valores de referencia <svg class="plus" viewBox="0 0 28 28"><circle cx="14" cy="14" r="14" fill="#007bff"/><path d="M7 14H21M14 7V21" stroke="#fff" stroke-width="2.500"/></svg></h2>
        <div class="card refs">
          <div><label>VENDEDOR</label><b>-</b></div>
          <div><label>TASACIÓN</label><b>465.000 €</b>
            <small><svg class="id" viewBox="0 0 20 15"><path d="M1 1H19V14H1Z" fill="none" stroke="#000" stroke-width="1.800"/><circle cx="7.500" cy="5.500" r="1.900"/><path d="M4 11Q4 8.500 7.500 8.500T11 11ZM13 5H16V7H13ZM13 8.500H16V10H13Z"/></svg>Tinsa</small>
            <small class="date"><svg class="cal" viewBox="0 0 15 16"><path fill-rule="evenodd" d="M3 0H5V2H10V0H12V2H15V16H0V2H3ZM2 6V14H13V6ZM4 8H8V12H4Z"/></svg>10/2021</small></div>
          <div><label>REAL ESTATE</label><b>-</b></div>
          <div><label>BROKER</label><b>-</b></div>
          <div><label>DEUDA PDTE</label><b>230.000 €</b>
            <small><svg class="id" viewBox="0 0 20 15"><path d="M1 1H19V14H1Z" fill="none" stroke="#000" stroke-width="1.800"/><circle cx="7.500" cy="5.500" r="1.900"/><path d="M4 11Q4 8.500 7.500 8.500T11 11ZM13 5H16V7H13ZM13 8.500H16V10H13Z"/></svg>Inversiones</small>
            <small class="date"><svg class="cal" viewBox="0 0 15 16"><path fill-rule="evenodd" d="M3 0H5V2H10V0H12V2H15V16H0V2H3ZM2 6V14H13V6ZM4 8H8V12H4Z"/></svg>11/2021</small></div>
        </div>
        <div class="card grid debts">
          <div class="row head"><span>Tipo</span><span>Valorador</span><span>Valor</span><span>Fecha Valoración</span></div>
          <div class="row"><span>Deuda pdte</span><span>Inversiones</span><span>230.000 €</span><span>25/11/2021</span></div>
          <div class="row"><span>Tasación</span><span>Tinsa</span><span>465.000 €</span><span>13/10/2021</span></div>
        </div>
      </section>
    </div>
  </main>

  <div class="top-shadow"></div>
  <div class="scroll-mark"></div>
  <div class="callout callout-nav"></div>
  <div class="callout callout-tab"></div>
</div>
</body>
</html>
```
FILE: styles.css
```css
* { box-sizing: border-box; }
body { margin: 0; background: #fff; color: #000; font-family: Montserrat, Inter, "Open Sans", sans-serif; }
.app { position: relative; display: flex; width: 2646px; height: 1340px; overflow: hidden; }

.sidebar { width: 292px; border-right: 2px solid #dedede; flex: none; }
.nav-item { display: flex; flex-direction: column; align-items: center; height: 144px; padding-top: 18px; font-size: 28px; line-height: 48px; color: #262626; }
.nav-item.active { color: #007bff; }
.nav-icon { width: 48px; height: 48px; flex: none; fill: currentColor; }

.content { flex: 1; padding: 0 9px 0 31px; }
.tabs-top { display: flex; justify-content: center; height: 92px; padding-right: 1px; border-bottom: 2px solid #dedede; font-size: 28px; line-height: 85px; color: #262626; }
.tab { padding: 0 32px; height: 90px; }
.tabs-top .active { color: #007bff; border-bottom: 4px solid #007bff; }

.card { border: 2px solid #dedede; border-radius: 8px; }
.summary { display: grid; grid-template-columns: repeat(6, 353.200px); height: 88px; margin: 32px 0; padding: 12px 0 0 96px; overflow: hidden; }
.summary div { display: flex; flex-direction: column; }
.summary label { font-size: 21px; line-height: 24px; color: #6c6c6c; }
.summary b { font-size: 25px; line-height: 52px; margin-top: -1px; font-weight: 500; letter-spacing: -.6px; color: #222; }

.map { position: relative; height: 533px; border-bottom: 2px solid #dedede; }
.map-canvas { display: block; width: 2315px; height: 531px; border-radius: 8px 8px 0 0; }
.map-canvas path, .map-canvas ellipse, .map-canvas circle { vector-effect: non-scaling-stroke; }
.residential { fill: #f9f4eb; }
.green { fill: #e6eed9; }
.green-deep { fill: #daeaca; }
.building { fill: #f4ebdf; }
.taxiway { fill: none; stroke: #e6e6e6; stroke-width: 1.600; }
.rail { fill: none; stroke: #dedede; stroke-width: 1.400; }
.water { fill: none; stroke: #cbe4e8; stroke-width: 2; }
.water ellipse, .water .fill { fill: #cbe4e8; }
.minor-case, .minor-fill, .major-case, .major-fill, .avenue-case, .avenue-fill, .motor-case, .motor-fill, .ramp-case, .ramp-fill { fill: none; stroke-linejoin: round; }
.minor-case { stroke: #ffebcb; stroke-width: 5; }
.minor-fill { stroke: #fff; stroke-width: 3; }
.major-case { stroke: #ffebc2; stroke-width: 8; }
.major-fill { stroke: #fff; stroke-width: 5.500; }
.avenue-case { stroke: #ffe9b8; stroke-width: 13; }
.avenue-fill { stroke: #fff; stroke-width: 10; }
.plaza-case, .plaza-fill, .ring-case, .ring-fill { fill: #e6eed9; }
.plaza-case { stroke: #ffe9b8; stroke-width: 11; }
.plaza-fill { stroke: #fff; stroke-width: 7; }
.ring-case { stroke: #ffe9b8; stroke-width: 6.500; }
.ring-fill { stroke: #fff; stroke-width: 4; }
.motor-case { stroke: #fcdb9a; stroke-width: 21; }
.motor-fill { stroke: #ffe7a3; stroke-width: 18; }
.ramp-case { stroke: #fcdb9a; stroke-width: 8; }
.ramp-fill { stroke: #ffe7a3; stroke-width: 5.500; }
.place { font-size: 18px; font-weight: 600; fill: #40597a; text-anchor: middle; paint-order: stroke; stroke: #eff4f8; stroke-width: 3; }
.way { font-size: 21px; font-weight: 600; fill: #768393; letter-spacing: .5px; }

.ctl { position: absolute; top: 20px; border: 4px solid rgba(0, 0, 0, .22); border-radius: 8px; background-clip: padding-box; }
.ctl button { display: flex; align-items: center; justify-content: center; width: 100%; height: 60px; padding: 0; border: 0; background: #fff; }
.ctl button + button { border-top: 2px solid #ccc; }
.ctl button:first-child { border-radius: 4px 4px 0 0; }
.ctl button:last-child { border-radius: 0 0 4px 4px; }
.zoom { left: 20px; width: 68px; }
.ctl.zoom button { padding-top: 7px; }
.zoom svg { width: 26px; height: 26px; }
.layers { right: 20px; width: 75px; }
.layers button { height: 63px; }
.layers svg { width: 28px; height: 28px; }
.layers .off { background: rgba(255, 255, 255, .7); fill: #65655f; }
.attribution { position: absolute; right: 0; bottom: 0; height: 33px; padding: 0 10px; background: rgba(255, 255, 255, .75); font-size: 22px; line-height: 32px; color: #333; white-space: nowrap; }
.attribution a { color: #0078a8; }
.drag { position: absolute; left: 1150px; bottom: -20px; display: flex; align-items: center; justify-content: center; width: 40px; height: 40px; border-radius: 50%; background: #dedede; }
.drag svg { width: 16px; height: 6px; }

.tabs-bottom { display: flex; height: 73px; padding: 0 100px 0 32px; border-bottom: 2px solid #dedede; font-size: 28px; line-height: 71px; color: #b0b0b0; }
.tabs-bottom a { margin-right: 65px; }
.tabs-bottom .active { position: relative; color: #007bff; }
.mark { position: absolute; left: 0; right: 0; bottom: 0; height: 4px; background: #007bff; }
.tabs-bottom .right { margin: 0 0 0 auto; color: #ccc; }

.panels { display: grid; grid-template-columns: 1150px 1149px; gap: 16px; }
h2 { display: flex; align-items: center; gap: 10px; height: 28px; margin: 26px 0 10px; font-size: 23px; line-height: 28px; font-weight: 500; letter-spacing: -.5px; white-space: nowrap; }
.plus { width: 28px; height: 28px; }
.grid .row { display: grid; height: 57px; border-top: 2px solid #dedede; font-size: 26px; line-height: 53px; text-align: center; }
.grid .row.head { height: 55px; border-top: 0; font-size: 25px; line-height: 54px; letter-spacing: -.55px; font-weight: 500; color: #555; }
.grid span:first-child { text-align: left; padding-left: 32px; }
.history .row { grid-template-columns: 152px 240px 147px 201px 182px 224px; }
.debts .row { grid-template-columns: 275px 288px 204px 378px; }
.refs { display: grid; grid-template-columns: repeat(5, 223px); justify-content: center; height: 163px; margin-bottom: 33px; padding-top: 15px; text-align: center; white-space: nowrap; }
.refs div { display: flex; flex-direction: column; align-items: center; }
.refs label { font-size: 28px; line-height: 44px; font-weight: 300; color: #707070; }
.refs b { font-size: 28px; line-height: 41px; font-weight: 500; letter-spacing: -.2px; }
.refs small { display: flex; align-items: center; gap: 4px; height: 22px; font-size: 19px; line-height: 22px; font-weight: 500; letter-spacing: -.4px; }
.refs .date { gap: 6px; }
.refs .id { width: 20px; height: 15px; }
.refs .cal { width: 15px; height: 16px; }

.top-shadow { position: absolute; inset: 0 0 auto; height: 12px; background: linear-gradient(#bbb, #eee 40%, rgba(255, 255, 255, 0)); }
.scroll-mark { position: absolute; right: 0; top: 904px; width: 3px; height: 46px; border-radius: 4px 0 0 4px; background: #555; }
.callout { position: absolute; border: 10px solid #ff2a00; }
.callout-nav { left: 0; top: 119px; width: 293px; height: 179px; border-radius: 26px; }
.callout-tab { left: 704px; top: 778px; width: 320px; height: 85px; border-radius: 22px; }
```
